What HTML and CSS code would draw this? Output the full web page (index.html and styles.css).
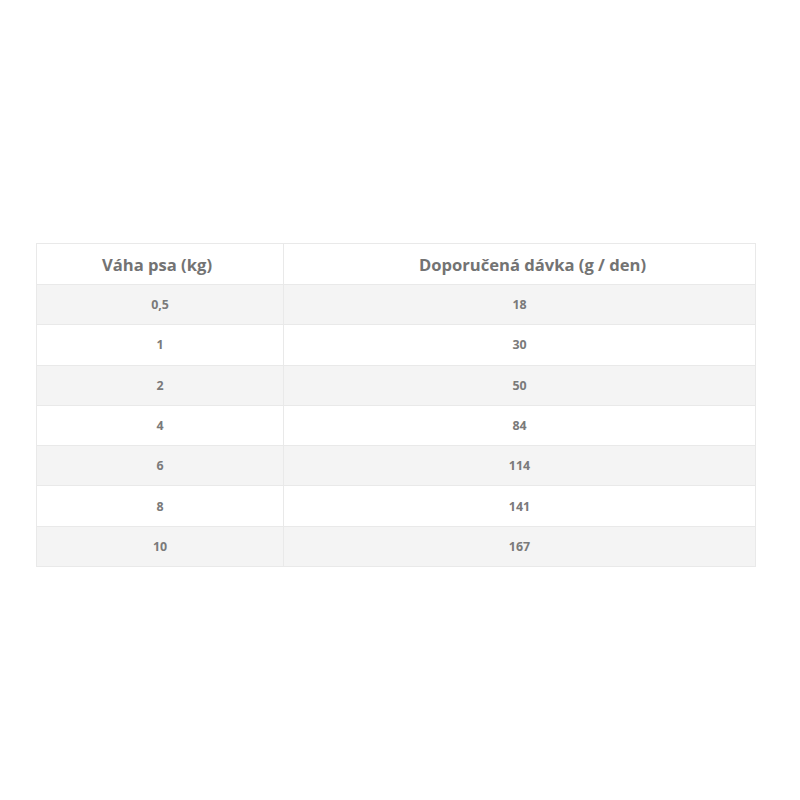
FILE: index.html
```html
<!DOCTYPE html>
<html lang="cs">
<head>
<meta charset="utf-8">
<link rel="stylesheet" href="styles.css">
</head>
<body>
<div class="wrap">
<table class="dose">
  <thead>
    <tr><th class="c1">Váha psa (kg)</th><th class="c2">Doporučená dávka (g / den)</th></tr>
  </thead>
  <tbody>
    <tr><td>0,5</td><td>18</td></tr>
    <tr><td>1</td><td>30</td></tr>
    <tr><td>2</td><td>50</td></tr>
    <tr><td>4</td><td>84</td></tr>
    <tr><td>6</td><td>114</td></tr>
    <tr><td>8</td><td>141</td></tr>
    <tr><td>10</td><td>167</td></tr>
  </tbody>
</table>
</div>
</body>
</html>
```
FILE: styles.css
```css
html, body { margin: 0; padding: 0; background: #fff; }
body { width: 800px; height: 800px; font-family: "Open Sans", "Liberation Sans", sans-serif; }
.wrap { padding: 243px 0 0 36px; }
.dose {
  width: 720px;
  border-collapse: collapse;
  table-layout: fixed;
  color: #7a7a7a;
  font-weight: 700;
}
.dose th, .dose td {
  border: 1px solid #e9e9e9;
  text-align: center;
  padding: 0;
}
.dose th { height: 40px; font-size: 16.6px; color: #737373; }
.dose td { height: 39.3px; font-size: 12.4px; }
.dose .c1 { width: 240px; padding-right: 6px; }
.dose .c2 { padding-left: 26px; }
.dose tbody tr:nth-child(odd) td { background: #f4f4f4; }
```
